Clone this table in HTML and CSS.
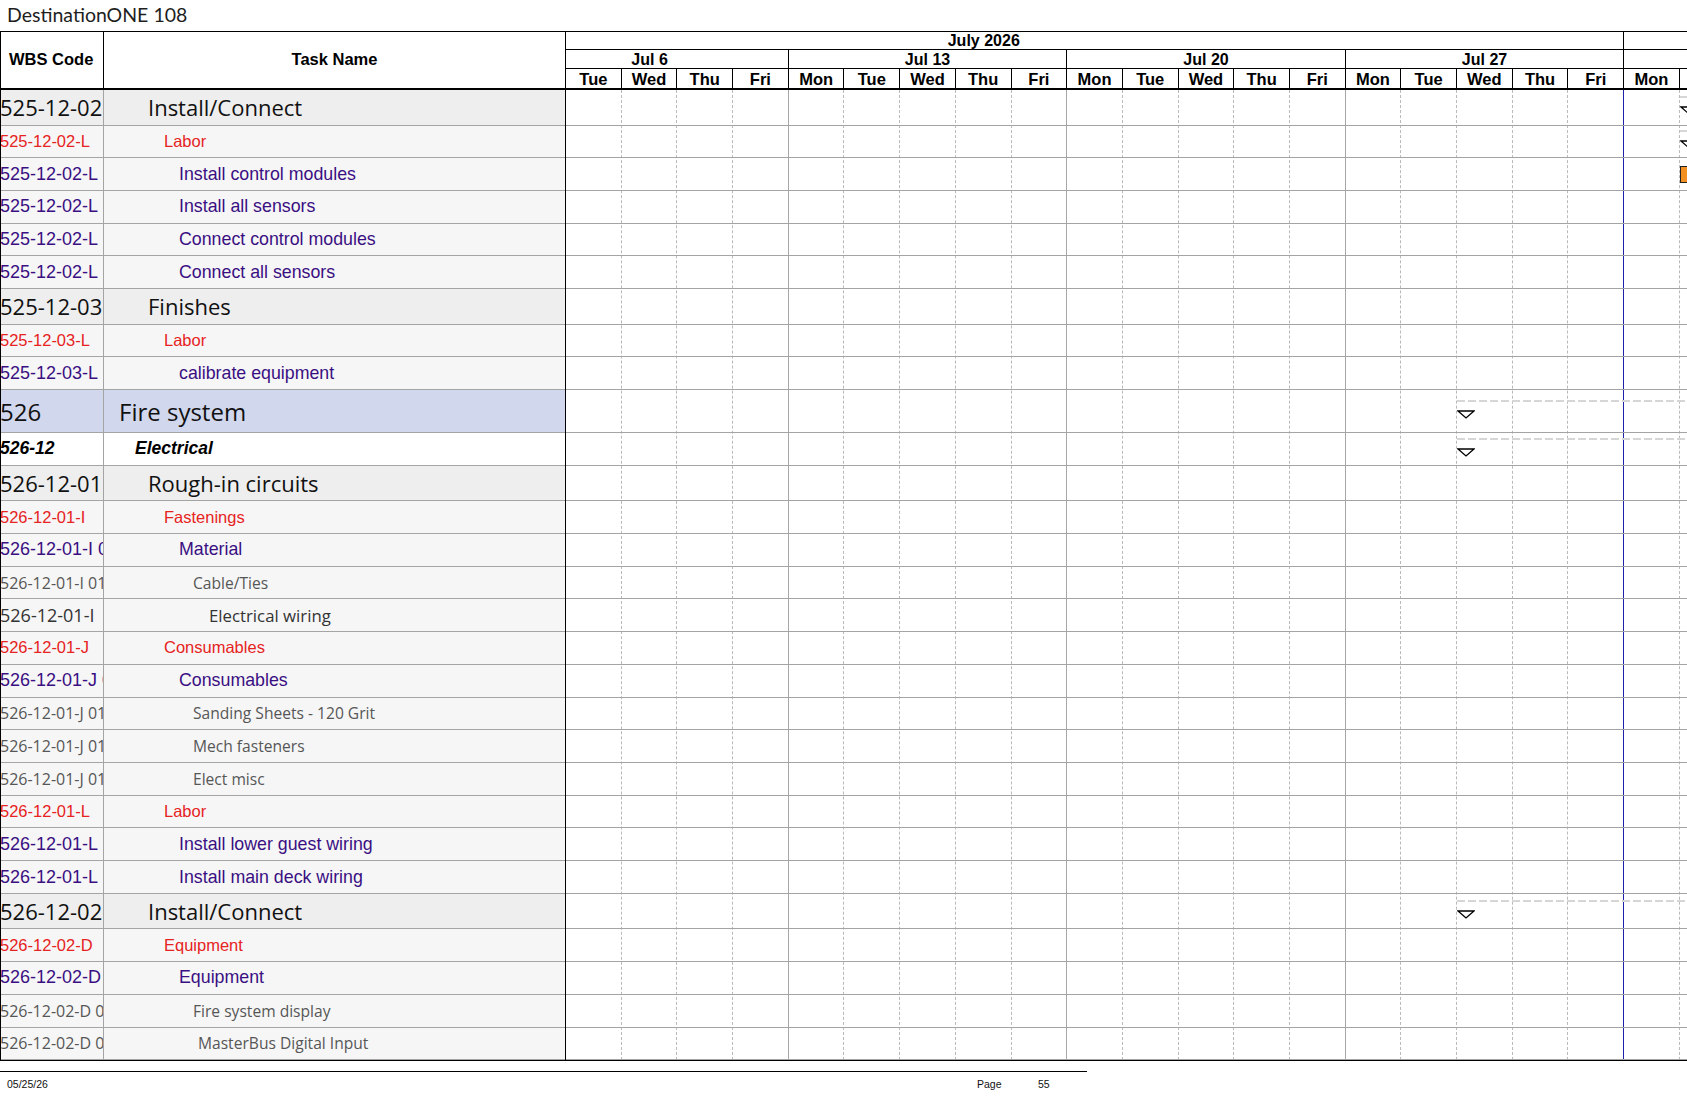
FILE: index.html
```html
<!DOCTYPE html>
<html>
<head>
<meta charset="utf-8">
<title>DestinationONE 108</title>
<link rel="stylesheet" href="styles.css">
</head>
<body>
<div class="title">DestinationONE 108</div>
<div class="sheet">
  <div class="left">
    <div class="lhead"><div class="hw">WBS Code</div><div class="ht">Task Name</div></div>
    <div class="row g"><div class="wbs">525-12-02</div><div class="task i44">Install/Connect</div></div>
    <div class="row r red"><div class="wbs">525-12-02-L</div><div class="task i59">Labor</div></div>
    <div class="row r pur"><div class="wbs">525-12-02-L</div><div class="task i74">Install control modules</div></div>
    <div class="row r pur"><div class="wbs">525-12-02-L</div><div class="task i74">Install all sensors</div></div>
    <div class="row r pur"><div class="wbs">525-12-02-L</div><div class="task i74">Connect control modules</div></div>
    <div class="row r pur"><div class="wbs">525-12-02-L</div><div class="task i74">Connect all sensors</div></div>
    <div class="row g"><div class="wbs">525-12-03</div><div class="task i44">Finishes</div></div>
    <div class="row r red"><div class="wbs">525-12-03-L</div><div class="task i59">Labor</div></div>
    <div class="row r pur"><div class="wbs">525-12-03-L</div><div class="task i74">calibrate equipment</div></div>
    <div class="row f"><div class="wbs">526</div><div class="task i15">Fire system</div></div>
    <div class="row r el"><div class="wbs">526-12</div><div class="task i30">Electrical</div></div>
    <div class="row g"><div class="wbs">526-12-01</div><div class="task i44">Rough-in circuits</div></div>
    <div class="row r red"><div class="wbs">526-12-01-I</div><div class="task i59">Fastenings</div></div>
    <div class="row r pur"><div class="wbs">526-12-01-I 01</div><div class="task i74">Material</div></div>
    <div class="row r gry"><div class="wbs">526-12-01-I 01 01</div><div class="task i89">Cable/Ties</div></div>
    <div class="row r wir"><div class="wbs">526-12-01-I</div><div class="task i105">Electrical wiring</div></div>
    <div class="row r red"><div class="wbs">526-12-01-J</div><div class="task i59">Consumables</div></div>
    <div class="row r pur"><div class="wbs">526-12-01-J 01</div><div class="task i74">Consumables</div></div>
    <div class="row r gry"><div class="wbs">526-12-01-J 01 01</div><div class="task i89">Sanding Sheets - 120 Grit</div></div>
    <div class="row r gry"><div class="wbs">526-12-01-J 01 02</div><div class="task i89">Mech fasteners</div></div>
    <div class="row r gry"><div class="wbs">526-12-01-J 01 03</div><div class="task i89">Elect misc</div></div>
    <div class="row r red"><div class="wbs">526-12-01-L</div><div class="task i59">Labor</div></div>
    <div class="row r pur"><div class="wbs">526-12-01-L</div><div class="task i74">Install lower guest wiring</div></div>
    <div class="row r pur"><div class="wbs">526-12-01-L</div><div class="task i74">Install main deck wiring</div></div>
    <div class="row g"><div class="wbs">526-12-02</div><div class="task i44">Install/Connect</div></div>
    <div class="row r red"><div class="wbs">526-12-02-D</div><div class="task i59">Equipment</div></div>
    <div class="row r pur"><div class="wbs">526-12-02-D</div><div class="task i74">Equipment</div></div>
    <div class="row r gry"><div class="wbs">526-12-02-D 01 01</div><div class="task i89">Fire system display</div></div>
    <div class="row r gry"><div class="wbs">526-12-02-D 01 02</div><div class="task i94">MasterBus Digital Input</div></div>
  </div>

  <div class="gantt">
    <div class="ghead">
      <div class="hrow mrow">
        <div class="hc m19"><div class="in m23">July 2026</div></div>
        <div class="hc rest"></div>
      </div>
      <div class="hrow wrow">
        <div class="hc d4"><div class="in d5 back1">Jul 6</div></div>
        <div class="hc d5">Jul 13</div>
        <div class="hc d5">Jul 20</div>
        <div class="hc d5">Jul 27</div>
        <div class="hc rest"></div>
      </div>
      <div class="hrow drow">
        <div class="hc d1">Tue</div><div class="hc d1">Wed</div><div class="hc d1">Thu</div><div class="hc d1">Fri</div>
        <div class="hc d1">Mon</div><div class="hc d1">Tue</div><div class="hc d1">Wed</div><div class="hc d1">Thu</div><div class="hc d1">Fri</div>
        <div class="hc d1">Mon</div><div class="hc d1">Tue</div><div class="hc d1">Wed</div><div class="hc d1">Thu</div><div class="hc d1">Fri</div>
        <div class="hc d1">Mon</div><div class="hc d1">Tue</div><div class="hc d1">Wed</div><div class="hc d1">Thu</div><div class="hc d1">Fri</div>
        <div class="hc d1">Mon</div><div class="hc d1">Tue</div><div class="hc d1">Wed</div>
      </div>
    </div>
    <div class="gbody">
      <div class="cols">
        <div class="c"></div><div class="c"></div><div class="c"></div><div class="c wk"></div>
        <div class="c"></div><div class="c"></div><div class="c"></div><div class="c"></div><div class="c wk"></div>
        <div class="c"></div><div class="c"></div><div class="c"></div><div class="c"></div><div class="c wk"></div>
        <div class="c"></div><div class="c"></div><div class="c"></div><div class="c"></div><div class="c bl"></div>
        <div class="c"></div><div class="c"></div><div class="c"></div>
      </div>
      <div class="grow g">
        <div class="dash at20"></div>
        <svg class="tri at20" width="18" height="9" viewBox="0 0 18 9"><path d="M1 1H17L9 8Z" fill="#fff" stroke="#000" stroke-width="1.3"/></svg>
      </div>
      <div class="grow r">
        <div class="dash at20"></div>
        <svg class="tri at20" width="18" height="9" viewBox="0 0 18 9"><path d="M1 1H17L9 8Z" fill="#fff" stroke="#000" stroke-width="1.3"/></svg>
      </div>
      <div class="grow r"><div class="bar at20"></div></div>
      <div class="grow r"></div>
      <div class="grow r"></div>
      <div class="grow r"></div>
      <div class="grow g"></div>
      <div class="grow r"></div>
      <div class="grow r"></div>
      <div class="grow f">
        <div class="dash at16"></div>
        <svg class="tri at16" width="18" height="9" viewBox="0 0 18 9"><path d="M1 1H17L9 8Z" fill="#fff" stroke="#000" stroke-width="1.3"/></svg>
      </div>
      <div class="grow r">
        <div class="dash at16"></div>
        <svg class="tri at16" width="18" height="9" viewBox="0 0 18 9"><path d="M1 1H17L9 8Z" fill="#fff" stroke="#000" stroke-width="1.3"/></svg>
      </div>
      <div class="grow g"></div>
      <div class="grow r"></div>
      <div class="grow r"></div>
      <div class="grow r"></div>
      <div class="grow r"></div>
      <div class="grow r"></div>
      <div class="grow r"></div>
      <div class="grow r"></div>
      <div class="grow r"></div>
      <div class="grow r"></div>
      <div class="grow r"></div>
      <div class="grow r"></div>
      <div class="grow r"></div>
      <div class="grow g">
        <div class="dash at16"></div>
        <svg class="tri at16" width="18" height="9" viewBox="0 0 18 9"><path d="M1 1H17L9 8Z" fill="#fff" stroke="#000" stroke-width="1.3"/></svg>
      </div>
      <div class="grow r"></div>
      <div class="grow r"></div>
      <div class="grow r"></div>
      <div class="grow r"></div>
    </div>
  </div>
</div>
<div class="footer"><span class="fdate">05/25/26</span><span>Page</span><span>55</span></div>
</body>
</html>
```

FILE: styles.css
```css
* { box-sizing: border-box; margin: 0; padding: 0; }
:root { --d: 55.7px; }
html, body { background: #fff; }
body {
  width: 1687px;
  height: 1097px;
  overflow: hidden;
  font-family: "Liberation Sans", Arial, sans-serif;
  color: #000;
}
.title {
  height: 31px;
  padding-left: 7px;
  font-family: Lato, "Open Sans", sans-serif;
  font-size: 19.5px;
  line-height: 30px;
  color: #1e1e1e;
}
.sheet {
  display: flex;
  width: max-content;
  border-top: 1px solid #000;
  border-bottom: 1px solid #000;
}
.left {
  flex: none;
  width: 566px;
  border-left: 1px solid #000;
  border-right: 1px solid #000;
}
.lhead {
  display: flex;
  height: 58px;
  border-bottom: 2px solid #000;
  font-weight: bold;
  font-size: 16.5px;
}
.hw {
  width: 103px;
  border-right: 1px solid #000;
  display: flex;
  align-items: center;
  padding-left: 8px;
  padding-bottom: 1px;
}
.ht {
  flex: 1;
  display: flex;
  align-items: center;
  justify-content: center;
  padding-bottom: 1px;
}
.row {
  display: flex;
  border-bottom: 1px solid #a4a4a4;
  background: #f6f6f6;
}
.r { height: 32.73px; }
.g { height: 35.5px; }
.f { height: 43px; }
.row.g { background: #eeeeee; }
.row.f { background: #d1d8ed; }
.row.el { background: #fff; }
.wbs {
  width: 103px;
  flex: none;
  border-right: 1px solid #a4a4a4;
  overflow: hidden;
  white-space: nowrap;
  display: flex;
  align-items: center;
  text-indent: -1px;
}
.task {
  flex: 1;
  overflow: hidden;
  white-space: nowrap;
  display: flex;
  align-items: center;
}
.i15 { padding-left: 15px; }
.i30 { padding-left: 31px; }
.i44 { padding-left: 44px; }
.i59 { padding-left: 60px; }
.i74 { padding-left: 75px; }
.i89 { padding-left: 89px; }
.i94 { padding-left: 94px; }
.i105 { padding-left: 105px; }

.row.g .wbs, .row.g .task {
  font-family: "Open Sans", sans-serif;
  font-size: 22px;
  color: #111;
}
.row.f .wbs, .row.f .task {
  font-family: "Open Sans", sans-serif;
  font-size: 24px;
  color: #111;
}
.row.el .wbs, .row.el .task {
  font-weight: bold;
  font-style: italic;
  font-size: 17.5px;
  color: #000;
}
.row.red .wbs, .row.red .task {
  font-size: 16.5px;
  color: #e6231e;
}
.row.pur .wbs, .row.pur .task {
  font-size: 17.8px;
  color: #3a0f82;
}
.row.pur .wbs { font-size: 18px; }
.row.gry .wbs, .row.gry .task {
  font-family: "Open Sans", sans-serif;
  font-size: 15.6px;
  color: #565656;
}
.row.gry .wbs { font-size: 16px; }
.row.wir .wbs, .row.wir .task {
  font-family: "Open Sans", sans-serif;
  font-size: 16.8px;
  color: #333;
}
.row.wir .wbs { font-size: 18px; }

/* gantt */
.gantt {
  flex: none;
  width: calc(22 * var(--d));
}
.ghead {
  height: 58px;
  border-bottom: 2px solid #000;
  font-weight: bold;
}
.hrow {
  display: flex;
  border-bottom: 1px solid #000;
}
.mrow { height: 18px; font-size: 16px; }
.wrow { height: 19px; font-size: 16px; }
.drow { height: 19px; border-bottom: none; font-size: 16.5px; }
.hc {
  flex: none;
  border-right: 1px solid #000;
  overflow: hidden;
  white-space: nowrap;
  text-align: center;
  line-height: 17px;
}
.wrow .hc { line-height: 19px; }
.drow .hc { line-height: 21px; }
.hc.rest { flex: 1; border-right: none; }
.d1 { width: var(--d); }
.d4 { width: calc(4 * var(--d)); }
.d5 { width: calc(5 * var(--d)); }
.m19 { width: calc(19 * var(--d)); }
.in { text-align: center; }
.m23 { width: calc(23 * var(--d)); margin-left: calc(-4 * var(--d)); }
.back1 { margin-left: calc(-1 * var(--d)); }

.gbody { position: relative; }
.cols {
  position: absolute;
  inset: 0;
  display: flex;
  pointer-events: none;
}
.c {
  flex: none;
  width: var(--d);
  height: 100%;
  border-right: 1px dashed #b9b9b9;
}
.c.wk { border-right: 1px solid #a8a8a8; }
.c.bl { border-right: 1px solid #1d22a6; }
.grow {
  position: relative;
  border-bottom: 1px solid #a4a4a4;
}
.at16 { left: calc(16 * var(--d)); }
.at20 { left: calc(20 * var(--d)); }
.dash {
  position: absolute;
  top: calc(50% - 11px);
  right: 0;
  height: 2px;
  background: repeating-linear-gradient(90deg, #d6d6d6 0 8px, transparent 8px 11px);
}
.tri {
  position: absolute;
  top: calc(50% - 1px);
  display: block;
}
.bar {
  position: absolute;
  top: calc(50% - 8.5px);
  height: 17px;
  width: 60px;
  background: #f39022;
  border: 1px solid #222;
}

.footer {
  width: 1087px;
  margin-top: 10px;
  border-top: 1px solid #000;
  display: grid;
  grid-template-columns: 977px 61px auto;
  font-size: 10.5px;
  line-height: 25px;
  color: #111;
}
.fdate { padding-left: 7px; }
```
